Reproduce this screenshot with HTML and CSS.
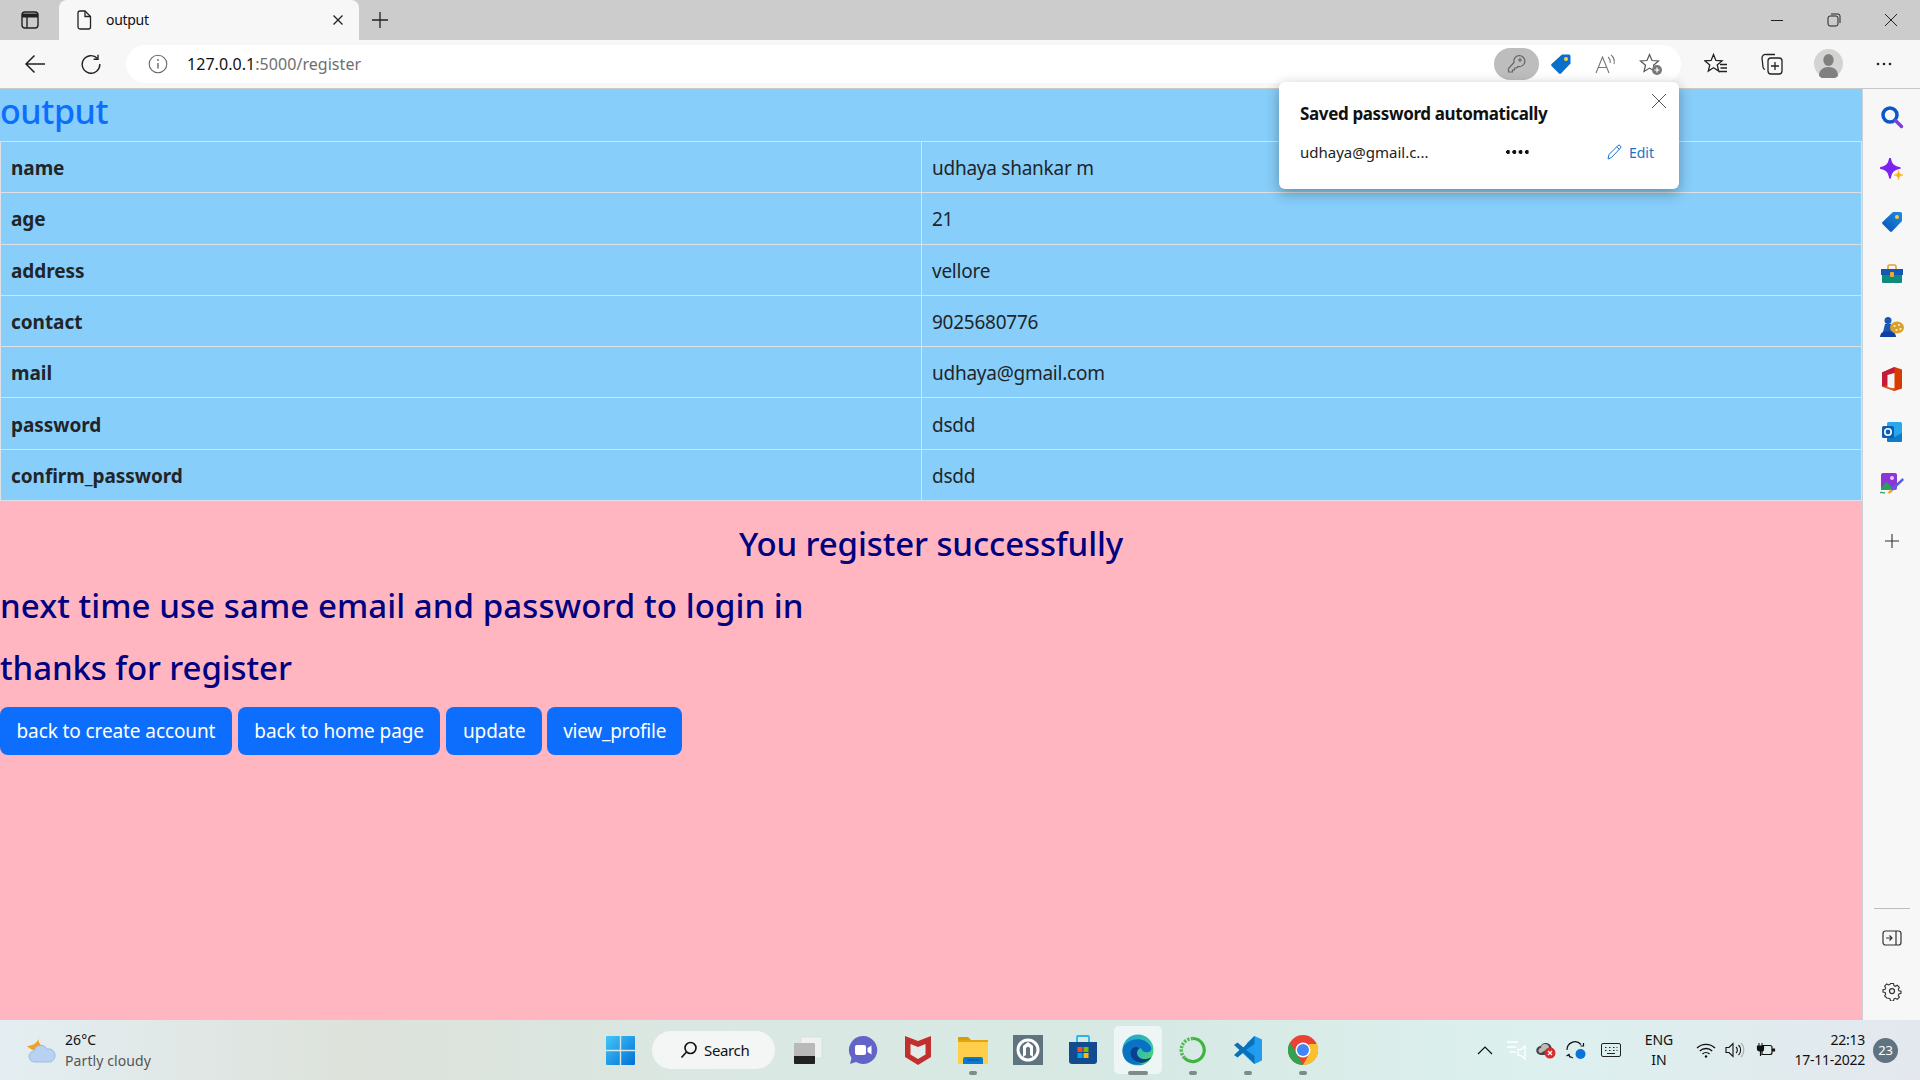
FILE: index.html
```html
<!DOCTYPE html>
<html lang="en">
<head>
<meta charset="utf-8">
<title>output</title>
<link rel="stylesheet" href="styles.css">
</head>
<body>
<div class="app">
  <header class="tabstrip">
    <div class="strip-btn">
      <svg width="20" height="20" viewBox="0 0 20 20" fill="none" stroke="#222" stroke-width="1.4"><rect x="2" y="2" width="16" height="16" rx="3"/><path d="M2 6.5h16" stroke-width="4" transform="translate(0 -1)"/><path d="M7 6v12"/></svg>
    </div>
    <div class="tab">
      <svg class="tab-icon" width="16" height="20" viewBox="0 0 16 20" fill="none" stroke="#222" stroke-width="1.3"><path d="M2 3a2 2 0 0 1 2-2h5l5.500 5.500V17a2 2 0 0 1-2 2H4a2 2 0 0 1-2-2z"/><path d="M9 1v5.500h5.500"/></svg>
      <span class="tab-title">output</span>
      <svg class="tab-close" width="12" height="12" viewBox="0 0 12 12" stroke="#222" stroke-width="1.3"><path d="M1.500 1.500l9 9M10.500 1.500l-9 9"/></svg>
    </div>
    <svg class="new-tab" width="18" height="18" viewBox="0 0 18 18" stroke="#222" stroke-width="1.3"><path d="M9 1v16M1 9h16"/></svg>
    <div class="win-controls">
      <svg width="14" height="14" viewBox="0 0 14 14" stroke="#222" stroke-width="1"><path d="M1 7.500h12"/></svg>
      <svg width="14" height="14" viewBox="0 0 14 14" fill="none" stroke="#222" stroke-width="1"><rect x="1" y="3" width="10" height="10" rx="2"/><path d="M4 1h7a2 2 0 0 1 2 2v7"/></svg>
      <svg width="14" height="14" viewBox="0 0 14 14" stroke="#222" stroke-width="1"><path d="M1 1l12 12M13 1L1 13"/></svg>
    </div>
  </header>

  <nav class="toolbar">
    <div class="tool-btn">
      <svg width="22" height="20" viewBox="0 0 22 20" fill="none" stroke="#222" stroke-width="1.500"><path d="M21 10H2M10.500 1.500L2 10l8.500 8.500"/></svg>
    </div>
    <div class="tool-btn">
      <svg width="20" height="20" viewBox="0 0 20 20" fill="none" stroke="#222" stroke-width="1.400"><path d="M16.500 4.500A8.800 8.800 0 1 0 18.800 10"/><path d="M17 0.800v4.400h-4.400"/></svg>
    </div>
    <div class="address">
      <svg width="20" height="20" viewBox="0 0 20 20" fill="none" stroke="#666" stroke-width="1.100"><circle cx="10" cy="10" r="8.800"/><path d="M10 9v5.500" stroke-width="1.400"/><circle cx="10" cy="6" r=".9" fill="#666" stroke="none"/></svg>
      <span class="url"><span class="url-host">127.0.0.1</span>:5000/register</span>
      <div class="addr-icons">
        <div class="addr-btn addr-key">
          <svg width="20" height="20" viewBox="0 0 20 20" fill="none" stroke="#666" stroke-width="1.200"><path d="M8 8.500a5.500 5.500 0 1 1 4 4L10.500 14H8.500v2H6.500v2H2.500v-3.500z"/><circle cx="14" cy="6" r="1.100"/></svg>
        </div>
        <div class="addr-btn">
          <svg width="22" height="22" viewBox="0 0 22 22"><path d="M12 1.500h7a1.500 1.500 0 0 1 1.500 1.500v7.500L11 20.500a1.500 1.500 0 0 1-2 0L1.500 13a1.500 1.500 0 0 1 0-2z" fill="#0a6fcb"/><circle cx="16" cy="6" r="2" fill="#ffd23f"/></svg>
        </div>
        <div class="addr-btn">
          <svg width="22" height="20" viewBox="0 0 22 20" fill="none" stroke="#777" stroke-width="1.100"><path d="M1 19L7.500 3 14 19M3.500 13.500h8"/><path d="M13 3a6 6 0 0 1 2 6M16 1a9 9 0 0 1 3 9"/></svg>
        </div>
        <div class="addr-btn">
          <svg width="24" height="24" viewBox="0 0 24 24"><path d="M10.500 2.500l2.500 6 6.500.5-5 4.200 1.500 6.300-5.500-3.400L5 19.500l1.500-6.300-5-4.200 6.500-.5z" fill="none" stroke="#555" stroke-width="1.200"/><circle cx="18" cy="18" r="5" fill="#777"/><path d="M18 15.500v5M15.500 18h5" stroke="#fff" stroke-width="1.200"/></svg>
        </div>
      </div>
    </div>
    <div class="tool-right">
      <div class="tool-btn">
        <svg width="24" height="22" viewBox="0 0 24 22" fill="none" stroke="#222" stroke-width="1.300"><path d="M9.500 1.500l2.400 6 6.100.4-4.800 4 1.500 6.100-5.200-3.300L4.300 18l1.500-6.100-4.800-4 6.100-.4z"/><path d="M16 11.500h7M16.500 15h6.500M14.500 18.500h8.500"/></svg>
      </div>
      <div class="tool-btn">
        <svg width="24" height="24" viewBox="0 0 24 24" fill="none" stroke="#222" stroke-width="1.300"><rect x="8" y="6" width="14" height="16" rx="3"/><path d="M15 10v8M11 14h8"/><path d="M15 2.500H6a3.500 3.500 0 0 0-4 3.500l1 9a3 3 0 0 0 2 2.500"/></svg>
      </div>
      <div class="tool-btn">
        <svg width="29" height="29" viewBox="0 0 29 29"><circle cx="14.500" cy="14.500" r="14.500" fill="#d3d3d1"/><ellipse cx="14.500" cy="11" rx="5.200" ry="6" fill="#808080"/><path d="M5 27c0-6 4-9 9.500-9S24 21 24 27a14 14 0 0 1-19 0z" fill="#808080"/></svg>
      </div>
      <div class="tool-btn">
        <svg width="16" height="4" viewBox="0 0 16 4" fill="#222"><circle cx="2" cy="2" r="1.300"/><circle cx="8" cy="2" r="1.300"/><circle cx="14" cy="2" r="1.300"/></svg>
      </div>
    </div>
  </nav>

  <div class="workspace">
    <main class="page">
      <h1 class="page-title">output</h1>
      <table class="data-table">
        <tbody>
          <tr><th>name</th><td>udhaya shankar m</td></tr>
          <tr><th>age</th><td>21</td></tr>
          <tr><th>address</th><td>vellore</td></tr>
          <tr><th>contact</th><td>9025680776</td></tr>
          <tr><th>mail</th><td>udhaya@gmail.com</td></tr>
          <tr><th>password</th><td>dsdd</td></tr>
          <tr><th>confirm_password</th><td>dsdd</td></tr>
        </tbody>
      </table>
      <h2 class="msg msg-center">You register successfully</h2>
      <h2 class="msg msg-long">next time use same email and password to login in</h2>
      <h2 class="msg">thanks for register</h2>
      <div class="actions">
        <a class="btn">back to create account</a>
        <a class="btn">back to home page</a>
        <a class="btn">update</a>
        <a class="btn btn-tight">view_profile</a>
      </div>
    </main>

    <aside class="sidebar">
      <div class="side-btn">
        <svg width="24" height="24" viewBox="0 0 24 24" fill="none"><circle cx="10" cy="10" r="7" stroke="#0b57c9" stroke-width="3.500"/><path d="M15.500 15.500l6 6" stroke="#7b3fe0" stroke-width="3.500" stroke-linecap="round"/></svg>
      </div>
      <div class="side-btn">
        <svg width="24" height="24" viewBox="0 0 24 24"><path d="M10 0c1.200 6 3 8.500 10 10-7 1.500-8.800 4-10 10C8.800 14 7 11.500 0 10 7 8.500 8.800 6 10 0z" fill="#7a22f0" stroke="#7a22f0" stroke-width="1.500" stroke-linejoin="round"/><path d="M18.500 12.500c.4 3 1.200 4 4.500 4.500-3.300.5-4.100 1.500-4.500 5-.4-3.500-1.200-4.500-4.500-5 3.300-.5 4.100-1.500 4.500-4.500z" fill="#fbb116" stroke="#fbb116" stroke-width=".6"/></svg>
      </div>
      <div class="side-btn">
        <svg width="22" height="22" viewBox="0 0 22 22"><defs><linearGradient id="tagGrad" x1="0" y1="1" x2="1" y2="0"><stop offset="0" stop-color="#0a4fb5"/><stop offset="1" stop-color="#1c8fe0"/></linearGradient></defs><path d="M12 1h7.500A1.500 1.500 0 0 1 21 2.500V10L11 20.500a1.500 1.500 0 0 1-2 0L1.500 13a1.500 1.500 0 0 1 0-2z" fill="url(#tagGrad)"/><circle cx="16" cy="6" r="2" fill="#ffc83d"/></svg>
      </div>
      <div class="side-btn">
        <svg width="24" height="20" viewBox="0 0 24 20"><path d="M8 5V2.500A1.500 1.500 0 0 1 9.500 1h5A1.500 1.500 0 0 1 16 2.500V5" fill="none" stroke="#e5a030" stroke-width="1.600"/><rect x="2" y="9" width="20" height="10" rx="1" fill="#0f8a7e"/><path d="M1 5h22v6H1z" fill="#1557b8"/><rect x="10" y="8" width="4" height="5" rx="1" fill="#f0a92d"/></svg>
      </div>
      <div class="side-btn">
        <svg width="24" height="20" viewBox="0 0 24 20"><circle cx="8" cy="3.500" r="3.500" fill="#1a55b8"/><path d="M5 7h6l2 8H3z" fill="#1a55b8"/><path d="M0 20c0-3 2-5 4-5.500h8c2 .5 4 2.500 4 5.500z" fill="#0f3fa3"/><ellipse cx="17" cy="10.500" rx="7" ry="6" fill="#d9a02b"/><circle cx="14.500" cy="9" r="1.100" fill="#fff2c8"/><circle cx="19" cy="8" r="1.100" fill="#fff2c8"/><circle cx="20.500" cy="12" r="1.100" fill="#fff2c8"/><circle cx="16.500" cy="13" r="1.100" fill="#fff2c8"/></svg>
      </div>
      <div class="side-btn">
        <svg width="20" height="24" viewBox="0 0 20 24"><path d="M12.500 0L20 2.500v19L12.500 24 0 19.500V5.500z" fill="#d83b01"/><path d="M12.500 0L0 5.500v14l5.500-2.200V8L12.500 6z" fill="#c4193a"/><path d="M5.500 8v12.500l7 1V6z" fill="#f4f4f4"/><path d="M0 19.500L12.500 24v-2.500l-7-1.200z" fill="#e8532a"/></svg>
      </div>
      <div class="side-btn">
        <svg width="22" height="22" viewBox="0 0 22 22"><rect x="6" y="1" width="15" height="18" rx="1.500" fill="#28a8ea"/><path d="M6 12l7.500 4L21 12v8a1 1 0 0 1-1 1H7a1 1 0 0 1-1-1z" fill="#0e7ac8"/><rect x="1" y="5" width="12" height="12" rx="1.500" fill="#0a5db8"/><circle cx="7" cy="11" r="3.200" fill="none" stroke="#fff" stroke-width="1.600"/></svg>
      </div>
      <div class="side-btn">
        <svg width="24" height="22" viewBox="0 0 24 22"><rect x="1" y="0" width="16" height="17" rx="2" fill="#8e35d8"/><circle cx="12" cy="5" r="2" fill="#e8c7ff"/><path d="M1 15l5.500-6 5 5 4 3H1z" fill="#2e9e5b"/><path d="M24 7L12.500 18 10.500 16 22.500 5z" fill="#5b5fd6"/><path d="M12.500 18c-1 2.500-3.500 3-5 2l3-4z" fill="#f0a92d"/><path d="M0 20c2-2 3 1 5-.5" fill="none" stroke="#2e9e5b" stroke-width="1.200"/></svg>
      </div>
      <div class="side-btn side-plus">
        <svg width="16" height="16" viewBox="0 0 16 16" stroke="#333" stroke-width="1.100"><path d="M8 1v14M1 8h14"/></svg>
      </div>
      <div class="side-bottom">
        <hr class="side-rule">
        <div class="side-btn">
          <svg width="20" height="16" viewBox="0 0 20 16" fill="none" stroke="#333" stroke-width="1.200"><rect x="1" y="1" width="18" height="14" rx="2.500"/><path d="M14 1v14M4 8h6M7.500 5.500L10 8l-2.500 2.500"/></svg>
        </div>
        <div class="side-btn">
          <svg width="20" height="20" viewBox="0 0 24 24" fill="none" stroke="#333" stroke-width="1.500"><circle cx="12" cy="12" r="3"/><path d="M10 2h4l.6 2.800 1.900.9 2.500-1.300 2.800 2.800-1.400 2.500.8 1.900 2.800.6v3l-2.800.7-.8 1.900 1.400 2.500-2.800 2.800-2.500-1.400-1.900.8-.6 2.800h-4l-.6-2.800-1.900-.8L5 21.300l-2.800-2.800 1.400-2.500-.8-1.900L0 13.400v-3l2.800-.6.800-1.900L2.200 5.400 5 2.600l2.500 1.300 1.900-.9z" transform="translate(1.200 1.200) scale(.9)"/></svg>
        </div>
      </div>
    </aside>
  </div>

  <footer class="taskbar">
    <div class="weather">
      <svg width="34" height="32" viewBox="0 0 34 32"><path d="M15 2c-1.500 4 0 9 5 11-2 5-12 5-17-1 6 0 12-4 12-10z" fill="#f5a021"/><path d="M11 28a5.500 5.500 0 0 1-1-11 7 7 0 0 1 13-2 6.500 6.500 0 0 1 3 13z" fill="#b9d2f2" stroke="#8fb3e6" stroke-width=".8"/></svg>
      <div class="weather-text">
        <span class="weather-temp">26°C</span>
        <span class="weather-desc">Partly cloudy</span>
      </div>
    </div>
    <div class="task-slot task-win">
      <svg width="29" height="29" viewBox="0 0 29 29"><defs><linearGradient id="winGrad" x1="0" y1="0" x2="1" y2="1"><stop offset="0" stop-color="#43c6fa"/><stop offset="1" stop-color="#0071d6"/></linearGradient></defs><path d="M0 1a1 1 0 0 1 1-1h12.800v13.800H0zM15.200 0H28a1 1 0 0 1 1 1v12.800H15.200zM0 15.200h13.800V29H1a1 1 0 0 1-1-1zM15.200 15.200H29V28a1 1 0 0 1-1 1H15.200z" fill="url(#winGrad)"/></svg>
    </div>
    <div class="task-search">
      <svg width="18" height="18" viewBox="0 0 18 18" fill="none" stroke="#111" stroke-width="1.600"><circle cx="10.500" cy="7" r="5.500"/><path d="M6.500 11L1.500 16.500"/></svg>
      <span>Search</span>
    </div>
    <div class="task-slot">
      <svg width="30" height="30" viewBox="0 0 30 30"><rect x="8" y="2" width="21" height="21" rx="1" fill="#eef1f0" stroke="#d5d9d8" stroke-width=".6"/><rect x="1" y="8" width="21" height="21" rx="1" fill="#b9b9b9"/><path d="M1 21h21v7a1 1 0 0 1-1 1H2a1 1 0 0 1-1-1z" fill="#222"/></svg>
    </div>
    <div class="task-slot">
      <svg width="30" height="30" viewBox="0 0 30 30"><path d="M15 1a14 14 0 1 1-7 26l-6 2 1.500-6A14 14 0 0 1 15 1z" fill="#6264c7"/><rect x="7" y="10" width="11" height="10" rx="2" fill="#fff"/><path d="M19.500 13l4-2.500v9l-4-2.500z" fill="#fff"/></svg>
    </div>
    <div class="task-slot">
      <svg width="28" height="30" viewBox="0 0 28 30"><path d="M1 1l13 5 13-5v21L14 30 1 22z" fill="#c1302d"/><path d="M6.500 9l7.500 3 7.500-3v10.500L14 24l-7.500-4.500z" fill="#e3ecea"/></svg>
    </div>
    <div class="task-slot task-open">
      <svg width="30" height="30" viewBox="0 0 30 30"><path d="M0 3a1 1 0 0 1 1-1h9l3 3h-13z" fill="#d99c0a"/><path d="M0 5h30v24H0z" fill="#ffce4a"/><path d="M0 5h30v2H0z" fill="#e3a50f"/><path d="M5 24a2 2 0 0 1 2-2h16a2 2 0 0 1 2 2v5H5z" fill="#0a7bd1"/><path d="M9 25h12" stroke="#004f94" stroke-width="1"/></svg>
    </div>
    <div class="task-slot">
      <svg width="30" height="30" viewBox="0 0 30 30"><rect width="30" height="30" fill="#607480"/><circle cx="15" cy="15" r="10" fill="none" stroke="#fff" stroke-width="3"/><path d="M10 22V11l5-4 5 4v11l-3-2v-7l-2-1.500-2 1.500v7z" fill="#fff"/></svg>
    </div>
    <div class="task-slot">
      <svg width="30" height="30" viewBox="0 0 30 30"><path d="M1 7h28v19a3 3 0 0 1-3 3H4a3 3 0 0 1-3-3z" fill="#124b8f"/><path d="M9 7V2a1 1 0 0 1 1-1h10a1 1 0 0 1 1 1v5" fill="none" stroke="#29b4ea" stroke-width="1.800"/><rect x="9.500" y="12" width="5" height="5" fill="#f25022"/><rect x="15.500" y="12" width="5" height="5" fill="#7fba00"/><rect x="9.500" y="18" width="5" height="5" fill="#00a4ef"/><rect x="15.500" y="18" width="5" height="5" fill="#ffb900"/></svg>
    </div>
    <div class="task-slot task-active">
      <svg width="32" height="32" viewBox="0 0 32 32"><defs><linearGradient id="edgeA" x1="0" y1="0" x2="1" y2="1"><stop offset="0" stop-color="#1fa2d8"/><stop offset=".6" stop-color="#35c1a5"/><stop offset="1" stop-color="#5fd85e"/></linearGradient></defs><circle cx="16" cy="16" r="15.500" fill="url(#edgeA)"/><path d="M0.500 16C2 5 22 0 29 13c1.500 4-2 6-6 5-3 0-2-3-5-4-5-1-9 3-8 8 1 5 7 8 12 8C10 33 0 28 .5 16z" fill="#0a72c4"/><path d="M14 13c-5 0-7 6-4 11 3 5 11 7 17 2 1-1 2-2 2-3-5 4-14 2-14-4 0-2 1-4 3-5-1 0-3-1-4-1z" fill="#0b3f8f"/></svg>
    </div>
    <div class="task-slot task-open">
      <svg width="28" height="28" viewBox="0 0 28 28" fill="none"><path d="M14 2.500A11.500 11.500 0 1 1 5.500 22" stroke="#3fb43f" stroke-width="3.200"/><path d="M5.500 22A11.500 11.500 0 0 1 14 2.500" stroke="#55b855" stroke-width="3.500" stroke-dasharray="2.200 1.300"/></svg>
    </div>
    <div class="task-slot task-open">
      <svg width="30" height="30" viewBox="0 0 30 30"><path d="M21.500 1L29 4.500v21L21.500 29 7 16z" fill="#1f9cf0" opacity=".99"/><path d="M21.500 1L21.500 29 14 22l0-14z" fill="#1f9cf0"/><path d="M21.500 1l-11 11.500L4.500 7.500 1 10l5.500 5L1 20l3.500 2.500 6-5L21.500 29V21L13 15l8.500-6z" fill="#0a70b8"/></svg>
    </div>
    <div class="task-slot task-open">
      <svg width="30" height="30" viewBox="0 0 30 30"><circle cx="15" cy="15" r="15" fill="#ea4335"/><path d="M15 30A15 15 0 0 1 2 7.500L9 19.500 15 30z" fill="#2ea44f"/><path d="M15 30l7-12.500 -1-8.500h8A15 15 0 0 1 15 30z" fill="#fbc02d"/><circle cx="15" cy="15" r="7.500" fill="#fff"/><circle cx="15" cy="15" r="6" fill="#4285f4"/></svg>
    </div>

    <div class="tray">
      <svg class="tray-caret" width="16" height="10" viewBox="0 0 16 10" fill="none" stroke="#111" stroke-width="1.200"><path d="M1 9l7-7 7 7"/></svg>
      <svg class="tray-mute" width="20" height="20" viewBox="0 0 20 20" fill="none" stroke="#fff" stroke-width="1.300"><path d="M1 2h11M1 7h9M4 12h6"/><path d="M12 9.500h3l4-3.500v13l-4-3.500h-3z"/></svg>
      <svg class="tray-cloud" width="20" height="18" viewBox="0 0 20 18"><path d="M5 14a4.500 4.500 0 0 1-.500-9 6 6 0 0 1 11 1.500A4 4 0 0 1 15 14z" fill="#444"/><path d="M5 12a2.500 2.500 0 0 1 0-5 4 4 0 0 1 8 0z" fill="#bbb"/><circle cx="14" cy="12" r="5.500" fill="#d92b2b"/><path d="M12 10l4 4M16 10l-4 4" stroke="#fff" stroke-width="1.200"/></svg>
      <svg class="tray-sync" width="22" height="22" viewBox="0 0 22 22"><path d="M2 11a8 8 0 0 1 14-5.500M18.500 4v3h-3M3 15.500a7 7 0 0 0 5 3.500M1.500 17l2.500-1.500 1 3" fill="none" stroke="#111" stroke-width="1.200"/><circle cx="15.500" cy="15" r="5" fill="#0a74da"/></svg>
      <svg class="tray-kbd" width="20" height="14" viewBox="0 0 20 14" fill="none" stroke="#222"><rect x=".5" y=".5" width="19" height="13" rx="1.500"/><path d="M4 4.500h1.500M8 4.500h1.500M12 4.500h1.500M15.500 4.500h1M4 7.500h1.500M8 7.500h1.500M12 7.500h1.500M15.500 7.500h1M6 10.500h8"/></svg>
      <div class="tray-lang"><span>ENG</span><span>IN</span></div>
      <svg class="tray-wifi" width="20" height="15" viewBox="0 0 20 15" fill="none" stroke="#111" stroke-width="1.300"><path d="M1 5a13 13 0 0 1 18 0M3.800 8a9 9 0 0 1 12.400 0M6.500 11a5 5 0 0 1 7 0"/><circle cx="10" cy="13.500" r="1.200" fill="#111" stroke="none"/></svg>
      <svg class="tray-vol" width="20" height="16" viewBox="0 0 20 16" fill="none" stroke="#111" stroke-width="1.100"><path d="M1 5.500h3l4-4v13l-4-4H1z"/><path d="M11 5a4 4 0 0 1 0 6M13.500 3a7 7 0 0 1 0 10"/><path d="M16 1a10 10 0 0 1 0 14" stroke="#aaa"/></svg>
      <svg class="tray-batt" width="20" height="16" viewBox="0 0 20 16" fill="none" stroke="#111" stroke-width="1.200"><path d="M6 3.500h8a2 2 0 0 1 2 2v5a2 2 0 0 1-2 2H6v-4"/><path d="M3 1v3M6 1v3" stroke-width="1"/><path d="M1.500 4h6v3a2 2 0 0 1-2 2h-2a2 2 0 0 1-2-2z" fill="#111"/><path d="M4.500 9v5" /><path d="M16.500 7h2v2h-2z" fill="#111"/></svg>
      <div class="tray-clock"><span>22:13</span><span>17-11-2022</span></div>
      <span class="tray-badge">23</span>
    </div>
  </footer>

  <div class="pw-popup">
    <div class="pw-title">Saved password automatically</div>
    <svg class="pw-close" width="16" height="16" viewBox="0 0 16 16" stroke="#555" stroke-width="1"><path d="M1 1l14 14M15 1L1 15"/></svg>
    <div class="pw-row">
      <span class="pw-email">udhaya@gmail.c...</span>
      <span class="pw-dots"></span>
      <a class="pw-edit">
        <svg width="15" height="16" viewBox="0 0 15 16" fill="none" stroke="#1a73c9" stroke-width="1"><path d="M1 15l1-4.500L11 1.500a1.500 1.500 0 0 1 2 0l.5.500a1.500 1.500 0 0 1 0 2L4.500 13.500z"/><path d="M10 3l2.500 2.500"/></svg>
        Edit
      </a>
    </div>
  </div>
</div>
</body>
</html>
```

FILE: styles.css
```css
* { box-sizing: border-box; }
html, body { margin: 0; padding: 0; height: 100%; overflow: hidden; }
body { font-family: "Noto Sans", "Open Sans", sans-serif; color: #212529; }
svg { display: block; flex: none; }

.app { position: relative; display: flex; flex-direction: column; width: 1920px; height: 1080px; }

/* tab strip */
.tabstrip { display: flex; align-items: center; height: 40px; background: #cccccc; flex: none; }
.strip-btn { display: flex; justify-content: center; align-items: center; width: 59px; height: 40px; }
.tab { display: flex; align-items: center; width: 300px; height: 40px; padding: 0 15px 0 17px; background: #f7f7f7; border-radius: 8px 8px 0 0; }
.tab-icon { margin-right: 14px; }
.tab-title { margin-top: -2px; font-size: 14px; letter-spacing: -.3px; color: #111; flex: 1; }
.new-tab { margin-left: 12px; }
.win-controls { display: flex; align-items: center; gap: 43px; margin-left: auto; padding-right: 22px; }

/* toolbar */
.toolbar { display: flex; align-items: center; height: 49px; padding: 0 8px 1px 7px; background: #f7f7f7; border-bottom: 1px solid #c9c9c9; flex: none; }
.tool-btn { display: flex; justify-content: center; align-items: center; width: 56px; height: 40px; }
.address { display: flex; align-items: center; width: 1555px; height: 38px; margin-left: 7px; padding: 0 7.500px 0 22px; background: #fff; border-radius: 19px; }
.url { margin-left: 19px; font-size: 16px; letter-spacing: .05px; color: #6f6f6f; }
.url-host { color: #111; }
.addr-icons { display: flex; align-items: center; margin-left: auto; }
.addr-btn { display: flex; justify-content: center; align-items: center; width: 45px; height: 32px; }
.addr-key { background: #bdbdbd; border-radius: 16px; }
.tool-right { display: flex; margin-left: auto; }

/* page */
.workspace { display: flex; flex: 1; min-height: 0; }
.page { width: 1863px; background: #ffb6c1; border-right: 1px solid #c9d3d6; flex: none; }
.page-title { margin: 0; height: 52px; background: #87cefa; color: #0d6efd; font-size: 34px; font-weight: 500; line-height: 45px; letter-spacing: -.4px; }
.data-table { width: 1862px; border-collapse: collapse; table-layout: fixed; background: #87cefa; font-size: 19px; }
.data-table th, .data-table td { height: 51.300px; padding: 2px 10px 0; border: 1px solid #dee2e6; text-align: left; vertical-align: middle; }
.data-table th { width: 921px; font-weight: 700; letter-spacing: -.05px; }
.data-table td { font-weight: 400; letter-spacing: -.25px; }
.msg { margin: 0; height: 62px; color: #000080; font-size: 33px; font-weight: 500; line-height: 61px; letter-spacing: -.1px; }
.msg-center { margin-top: 12px; text-align: center; }
.msg-long { letter-spacing: .08px; }
.actions { display: flex; gap: 6px; margin-top: 8px; }
.btn { display: block; height: 48px; padding: 0 16.500px; background: #0d6efd; border-radius: 8px; color: #fff; font-size: 19px; line-height: 49px; letter-spacing: -.1px; }
.btn-tight { margin-left: -1px; letter-spacing: -.25px; padding: 0 16px; }

/* sidebar */
.sidebar { display: flex; flex-direction: column; width: 57px; padding: 2px 0 3px; background: #f7f7f7; }
.side-btn { display: flex; justify-content: center; align-items: center; height: 52.400px; }
.side-plus { margin-top: 5px; }
.side-bottom { margin-top: auto; }
.side-rule { width: 36px; margin: 0 auto 3px; border: 0; border-top: 1px solid #bdbdbd; }

/* taskbar */
.taskbar { display: flex; align-items: center; height: 60px; flex: none; background: linear-gradient(90deg, #e4eef2 0%, #dde2db 18%, #dae8e3 40%, #d7e9e4 60%, #dcf0ee 80%, #e4e8ee 100%); }
.weather { display: flex; align-items: center; width: 592px; padding-left: 24px; }
.weather-text { display: flex; flex-direction: column; margin-left: 7px; font-size: 14px; line-height: 21px; letter-spacing: .1px; }
.weather-temp { color: #111; }
.weather-desc { color: #555; }
.task-slot { position: relative; display: flex; justify-content: center; align-items: center; width: 55px; height: 48px; }
.task-win { width: 56px; margin-right: 4px; }
.task-search { display: flex; align-items: center; gap: 6px; width: 123px; height: 38px; margin-right: 5.500px; padding-left: 28px; background: #f4f6f5; border-radius: 19px; font-size: 15px; letter-spacing: -.35px; color: #111; }
.task-open::after, .task-active::after { content: ""; position: absolute; bottom: -1px; left: 50%; width: 8px; height: 4px; margin-left: -4px; background: #7f8a8a; border-radius: 2px; }
.task-active { width: 48px; margin: 0 3.500px; background: #edf6f4; border-radius: 5px; }
.task-active::after { width: 20px; margin-left: -10px; }
.tray { position: relative; display: flex; align-items: center; height: 60px; margin-left: auto; padding-right: 22px; }
.tray-caret { margin-right: 13px; }
.tray-mute { margin-right: 10px; }
.tray-cloud { margin-right: 9px; }
.tray-sync { margin-right: 14px; }
.tray-lang { display: flex; flex-direction: column; align-items: center; width: 40px; margin-left: 18px; font-size: 14px; line-height: 20px; color: #111; }
.tray-wifi { margin-left: 17px; }
.tray-vol { margin-left: 9px; }
.tray-batt { margin-left: 11px; }
.tray-clock { display: flex; flex-direction: column; align-items: flex-end; width: 89px; font-size: 14px; line-height: 20px; letter-spacing: -.25px; color: #111; }
.tray-badge { display: flex; justify-content: center; align-items: center; width: 25px; height: 25px; margin-left: 8px; background: #5f7480; border-radius: 50%; color: #fff; font-size: 13px; letter-spacing: -.3px; }

/* password popup */
.pw-popup { position: absolute; left: 1279px; top: 82px; width: 400px; height: 107px; padding: 20px 21px 0; background: #fff; border-radius: 6px; box-shadow: 0 4px 14px rgba(0, 0, 0, .32); }
.pw-title { font-size: 17px; font-weight: 700; line-height: 24px; letter-spacing: -.36px; color: #111; }
.pw-close { position: absolute; top: 11px; right: 12px; }
.pw-row { display: flex; align-items: center; height: 24px; margin-top: 14px; font-size: 15px; color: #222; }
.pw-email { width: 206px; }
.pw-dots { width: 23px; height: 4px; background: radial-gradient(circle at 2px 2px, #111 1.800px, transparent 2.200px) 0 0 / 6.300px 4px repeat-x; }
.pw-edit { display: flex; align-items: center; gap: 7px; margin-left: auto; margin-right: 4px; color: #1a73c9; font-size: 14px; }
```
